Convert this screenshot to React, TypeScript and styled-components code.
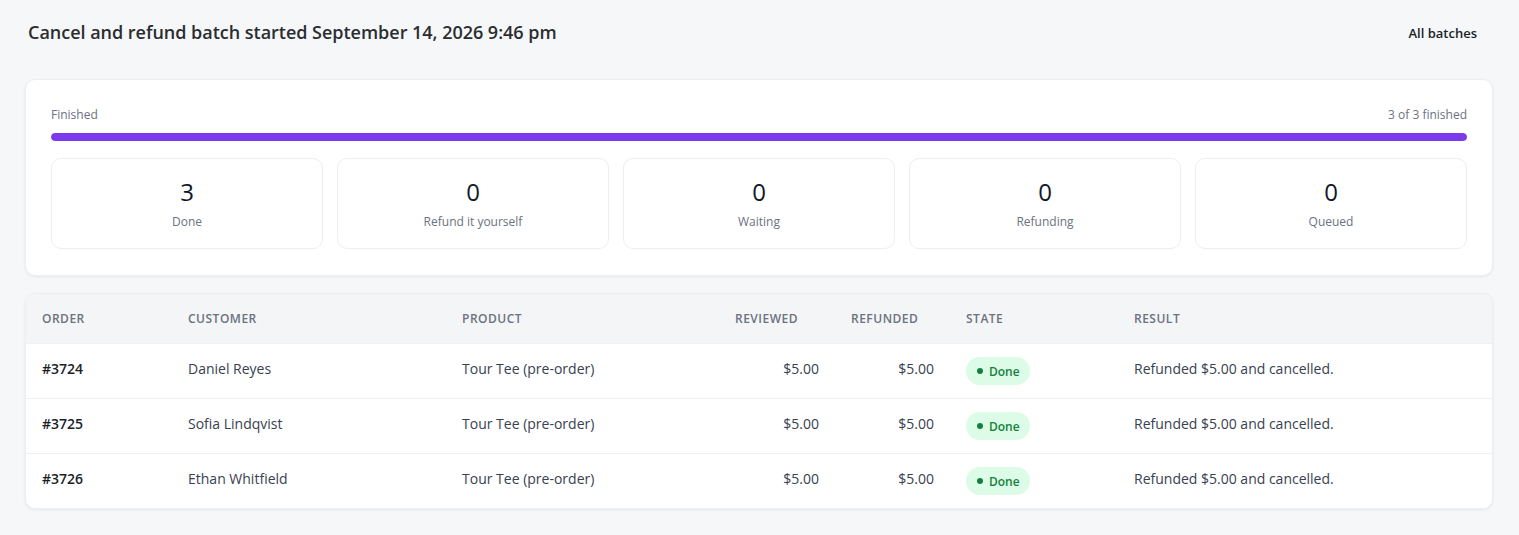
import React from "react";
import styled, { createGlobalStyle } from "styled-components";

const GlobalStyle = createGlobalStyle`
  html, body { margin: 0; padding: 0; background: #f6f7f8; }
  body { font-family: "Open Sans", "Noto Sans", Arial, sans-serif; color: #1f2937; }
  * { box-sizing: border-box; }
`;

const Page = styled.div`
  padding: 20px 26px 25px 25px;
  display: flex;
  flex-direction: column;
`;

const Header = styled.header`
  display: flex;
  align-items: center;
  justify-content: space-between;
  height: 24px;
  margin-bottom: 35px;
`;

const Title = styled.h1`
  margin: 0 0 0 3px;
  font-size: 18px;
  font-weight: 600;
  line-height: 24px;
  color: #2a2d31;
  letter-spacing: -0.02px;
`;

const LinkButton = styled.button`
  border: 0;
  background: transparent;
  font-family: inherit;
  font-size: 13px;
  font-weight: 600;
  color: #1a1f2b;
  padding: 0 16px;
  line-height: 24px;
  margin-top: 2px;
  cursor: pointer;
`;

const Card = styled.section`
  background: #fff;
  border: 1px solid #eceef1;
  border-radius: 10px;
  box-shadow: 0 1px 3px rgba(16, 24, 40, 0.07);
`;

const ProgressCard = styled(Card)`
  padding: 27px 25px 26px;
  margin-bottom: 17px;
`;

const ProgressMeta = styled.div`
  display: flex;
  justify-content: space-between;
  font-size: 12px;
  line-height: 16px;
  color: #6b7280;
  margin-bottom: 10px;
`;

const Track = styled.div`
  height: 8px;
  border-radius: 4px;
  background: #ede9fe;
  overflow: hidden;
  margin-bottom: 17px;
`;

const Fill = styled.div`
  height: 100%;
  border-radius: 4px;
  background: #7c3aed;
`;

const Stats = styled.div`
  display: grid;
  grid-template-columns: repeat(5, 1fr);
  gap: 14px;
`;

const Stat = styled.div`
  height: 91px;
  border: 1px solid #eceef1;
  border-radius: 10px;
  display: flex;
  flex-direction: column;
  align-items: center;
  justify-content: center;
  gap: 7px;
`;

const StatValue = styled.div`
  font-size: 24px;
  line-height: 30px;
  color: #111827;
`;

const StatLabel = styled.div`
  font-size: 12px;
  line-height: 16px;
  color: #6b7280;
`;

const TableCard = styled(Card)`
  overflow: hidden;
`;

const COLS = "146px 274px 273px 116px 115px 168px 1fr";

const Row = styled.div<{ $head?: boolean }>`
  display: grid;
  grid-template-columns: ${COLS};
  align-items: center;
  height: ${(p) => (p.$head ? "49px" : "55px")};
  background: ${(p) => (p.$head ? "#f4f5f7" : "#fff")};
  border-top: ${(p) => (p.$head ? "0" : "1px solid #eef0f2")};
`;

const HeadCell = styled.div`
  padding: 0 16px;
  font-size: 12px;
  font-weight: 600;
  letter-spacing: 0.5px;
  text-transform: uppercase;
  color: #6b7280;
`;

const Cell = styled.div<{ $right?: boolean; $strong?: boolean }>`
  padding: 0 16px;
  font-size: 14px;
  line-height: 20px;
  text-align: ${(p) => (p.$right ? "right" : "left")};
  color: ${(p) => (p.$strong ? "#1a1f2b" : "#374151")};
  font-weight: ${(p) => (p.$strong ? 600 : 400)};
  margin-top: -5px;
`;

const BadgeCell = styled.div`
  padding: 0 16px;
  display: flex;
`;

const Badge = styled.span`
  display: inline-flex;
  align-items: center;
  gap: 6px;
  height: 28px;
  padding: 0 10px 0 11px;
  border-radius: 14px;
  background: #dcfce7;
  color: #15803d;
  font-size: 12px;
  font-weight: 600;
`;

const Dot = styled.span`
  width: 6px;
  height: 6px;
  border-radius: 50%;
  background: #15803d;
`;

const stats = [
  { value: 3, label: "Done" },
  { value: 0, label: "Refund it yourself" },
  { value: 0, label: "Waiting" },
  { value: 0, label: "Refunding" },
  { value: 0, label: "Queued" },
];

const rows = [
  { order: "#3724", customer: "Daniel Reyes" },
  { order: "#3725", customer: "Sofia Lindqvist" },
  { order: "#3726", customer: "Ethan Whitfield" },
];

const heads = ["Order", "Customer", "Product", "Reviewed", "Refunded", "State", "Result"];

export default function App() {
  return (
    <>
      <GlobalStyle />
      <Page>
        <Header>
          <Title>Cancel and refund batch started September 14, 2026 9:46 pm</Title>
          <LinkButton>All batches</LinkButton>
        </Header>

        <ProgressCard>
          <ProgressMeta>
            <span>Finished</span>
            <span>3 of 3 finished</span>
          </ProgressMeta>
          <Track>
            <Fill style={{ width: "100%" }} />
          </Track>
          <Stats>
            {stats.map((s) => (
              <Stat key={s.label}>
                <StatValue>{s.value}</StatValue>
                <StatLabel>{s.label}</StatLabel>
              </Stat>
            ))}
          </Stats>
        </ProgressCard>

        <TableCard>
          <Row $head>
            {heads.map((h) => (
              <HeadCell key={h}>{h}</HeadCell>
            ))}
          </Row>
          {rows.map((r) => (
            <Row key={r.order}>
              <Cell $strong>{r.order}</Cell>
              <Cell>{r.customer}</Cell>
              <Cell>Tour Tee (pre-order)</Cell>
              <Cell $right>$5.00</Cell>
              <Cell $right>$5.00</Cell>
              <BadgeCell>
                <Badge>
                  <Dot />
                  Done
                </Badge>
              </BadgeCell>
              <Cell>Refunded $5.00 and cancelled.</Cell>
            </Row>
          ))}
        </TableCard>
      </Page>
    </>
  );
}
